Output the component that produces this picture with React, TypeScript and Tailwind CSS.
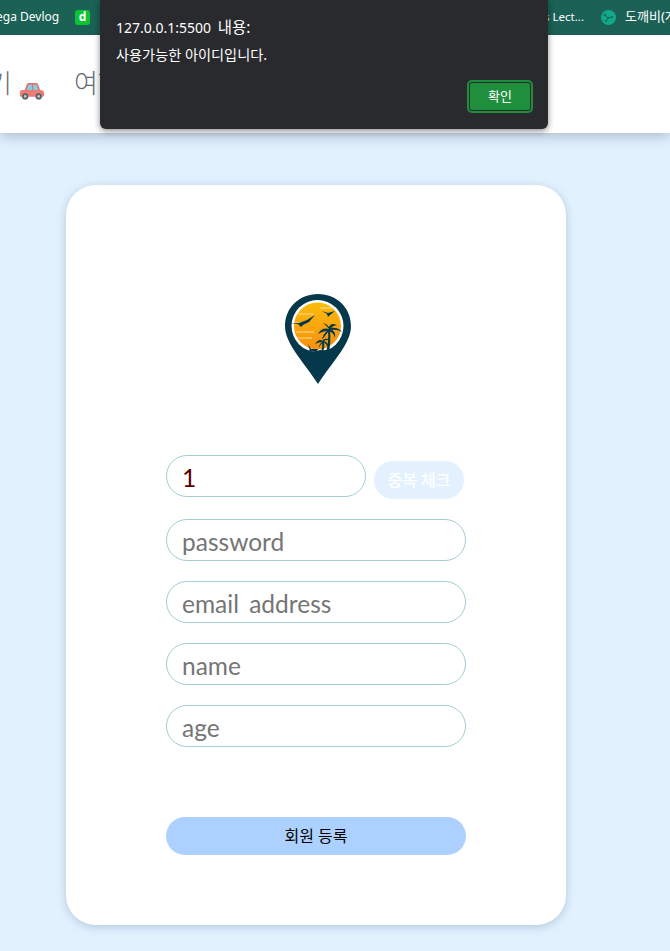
import React from 'react';

const fontUi = "font-['Noto_Sans','Noto_Sans_CJK_KR',sans-serif]";

function CarIcon() {
  return (
    <svg width="27" height="18" viewBox="0 0 30 20" className="mt-[15px] ml-[6px] shrink-0">
      <path d="M7 10 L10 2 Q10.500 1 12 1 H20 Q21.500 1 22 2 L25 10 Z" fill="#e0736c" />
      <path d="M9.500 10 L11.500 3 H15.500 V10 Z M17 3 H20.500 L23 10 H17 Z" fill="#7fd0e8" />
      <path d="M2 11 Q2 9 5 9 H25 Q29 9 29 13 V15 Q29 16.500 27 16.500 H3.500 Q2 16.500 2 15 Z" fill="#ea7d75" />
      <circle cx="8" cy="16" r="3.500" fill="#5a5f63" />
      <circle cx="8" cy="16" r="1.500" fill="#c9ccce" />
      <circle cx="23" cy="16" r="3.500" fill="#5a5f63" />
      <circle cx="23" cy="16" r="1.500" fill="#c9ccce" />
    </svg>
  );
}

function MoleculeIcon() {
  return (
    <svg width="15" height="15" viewBox="0 0 15 15" className="ml-[17px] shrink-0">
      <circle cx="7.500" cy="7.500" r="7.500" fill="#14a88a" />
      <path d="M4 5 L7 8 L11 7 M7 8 L5 11" stroke="#0c6f5c" strokeWidth="1" fill="none" />
      <circle cx="4" cy="5" r="1.300" fill="#0c6f5c" />
      <circle cx="7" cy="8" r="1.300" fill="#0c6f5c" />
      <circle cx="11" cy="7" r="1.100" fill="#0c6f5c" />
      <circle cx="5" cy="11" r="1.100" fill="#0c6f5c" />
    </svg>
  );
}

function LogoPin() {
  return (
    <svg width="68" height="92" viewBox="0 0 68 92" className="ml-[4px]">
      <defs>
        <linearGradient id="sun" x1="0" y1="0" x2="0" y2="1">
          <stop offset="0" stopColor="#fbbc0c" />
          <stop offset="1" stopColor="#f6900f" />
        </linearGradient>
      </defs>
      <path d="M34 0 C15 0 1 14 1 32 C1 50 20 68 34 90 C48 68 67 50 67 32 C67 14 53 0 34 0 Z" fill="#04384a" />
      <circle cx="33.500" cy="32" r="26" fill="#ffffff" />
      <circle cx="33.500" cy="32" r="23.500" fill="url(#sun)" />
      <path d="M14 20 H30 M11 29 H20 M12 38 H30 M13 44 H28 M36 14 H50" stroke="#fbdc95" strokeWidth="1" />
      <path d="M14 58 Q30 58 36 56 Q44 57 54 52 Q46 62 34 62 Q22 62 14 58 Z" fill="#04384a" />
      {/* birds */}
      <path d="M6 29 L15 29 L23 26 L31 21 L25 28 L19 31 L17 33 L14 30 Z" fill="#04384a" />
      <path d="M38 17 L44 19 L51 17 L46 21 L44 23 L43 20 Z" fill="#04384a" />
      {/* big palm */}
      <path d="M42 58 Q45 48 44 36 L46 36 Q47 48 45 58 Z" fill="#04384a" />
      <path d="M45 35 Q38 33 34 40 Q39 37 43 37 Q39 40 38 46 Q42 40 45 37 Q50 39 51 44 Q52 38 48 36 Q53 35 58 38 Q54 33 47 34 Q50 31 53 31 Q47 28 45 33 Q43 30 39 29 Q43 32 45 35 Z" fill="#04384a" />
      {/* small palm */}
      <path d="M37 58 Q39 53 38 47 L40 47 Q41 53 39 58 Z" fill="#04384a" />
      <path d="M39 47 Q35 44 31 50 Q35 48 38 48 Q35 50 35 54 Q37 50 39 48 Q43 50 44 53 Q45 49 40 47 Q43 45 46 47 Q43 43 39 46 Z" fill="#04384a" />
      {/* beach chair */}
      <path d="M24 50 L27 55 H34 L33 57 H26 Z" fill="#04384a" />
      <path d="M26 56 V59 M32 56 V59" stroke="#04384a" strokeWidth="1" />
    </svg>
  );
}

function TextInput({ placeholder, value }: { placeholder: string; value?: string }) {
  return (
    <input
      readOnly
      value={value}
      placeholder={placeholder}
      className="w-full h-[42px] rounded-[21px] border border-[#a3cdd3] bg-white px-[15px] pt-[2px] font-['Lato','Noto_Sans_CJK_KR',sans-serif] text-[24.500px] [word-spacing:4px] text-[#5b0000] placeholder:text-[#757575] outline-none"
    />
  );
}

export default function App() {
  return (
    <div className={`relative h-[951px] overflow-hidden bg-[#e2f1fe] ${fontUi}`}>
      {/* Bookmark bar */}
      <div className="flex h-[35px] items-center justify-between overflow-hidden border-b border-[#1a5a50] bg-[#1b6156] text-[12px] text-white">
        <div className="flex items-center">
          <span className="ml-[-4px] whitespace-nowrap">ega Devlog</span>
          <span className="ml-[16px] flex h-[15px] w-[15px] items-center justify-center rounded-[3px] bg-[#0bc431] text-[12px] font-bold">d</span>
        </div>
        <div className="flex items-center">
          <span className="whitespace-nowrap text-[11.500px]">s Lect...</span>
          <MoleculeIcon />
          <span className="ml-[9px] mr-[-3px] w-[48px] overflow-hidden whitespace-nowrap text-[13px]">도깨비(게임)</span>
        </div>
      </div>

      {/* Site header */}
      <div className="flex h-[98px] items-center bg-white pb-[2px] text-[26px] font-light text-[#666a6e] shadow-[0_4px_12px_rgba(60,80,100,0.3)]">
        <span className="ml-[-12px]">기</span>
        <CarIcon />
        <span className="ml-[29px]">여행</span>
      </div>

      {/* Signup card */}
      <div className="ml-[66px] mt-[52px] flex h-[740px] w-[500px] flex-col items-center rounded-[30px] bg-white pt-[109px] shadow-[0_2px_10px_rgba(70,110,150,0.3)]">
        <LogoPin />
        <form className="mt-[69px] flex w-[300px] flex-col gap-[20px]">
          <div className="flex items-start">
            <div className="w-[200px] shrink-0">
              <TextInput placeholder="id" value="1" />
            </div>
            <button
              type="button"
              className="ml-[8px] mt-[6px] h-[38px] w-[90px] rounded-[19px] bg-[#e3f1ff] text-[16px] font-medium text-white"
            >
              중복 체크
            </button>
          </div>
          <TextInput placeholder="password" />
          <TextInput placeholder="email address" />
          <TextInput placeholder="name" />
          <TextInput placeholder="age" />
          <button
            type="button"
            className="mt-[50px] h-[38px] w-full rounded-[19px] bg-[#add1ff] text-[16px] text-black"
          >
            회원 등록
          </button>
        </form>
      </div>

      {/* Browser alert */}
      <div className="absolute left-[100px] top-0 flex h-[129px] w-[448px] flex-col rounded-b-[6px] bg-[#292a2d] px-[16px] pt-[17px] text-white shadow-[0_2px_6px_rgba(0,0,0,0.45)]">
        <p className="text-[14px] leading-[20px]">
          127.0.0.1:5500 <span className="ml-[3px] text-[15.500px]">내용:</span>
        </p>
        <p className="mt-[8px] text-[14.200px] leading-[18px]">사용가능한 아이디입니다.</p>
        <div className="mt-auto mb-[18px] mr-[1px] flex justify-end">
          <button
            type="button"
            className="h-[29px] w-[62px] rounded-[3px] border border-[#292a2d] bg-[#1f8f3e] text-[13px] text-white outline-2 outline-[#1f8f3e]"
          >
            확인
          </button>
        </div>
      </div>
    </div>
  );
}
